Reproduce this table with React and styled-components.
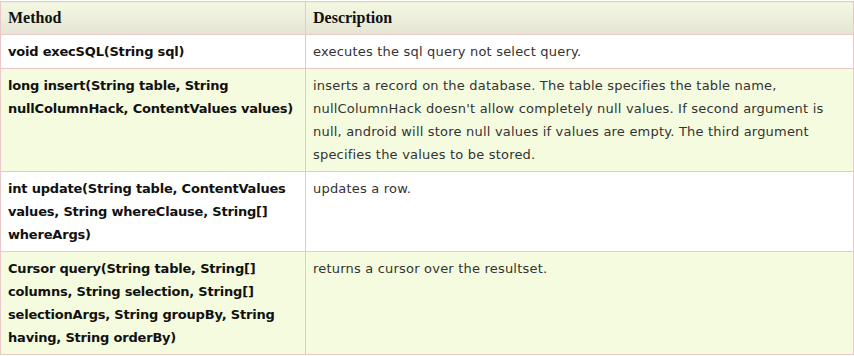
import React from "react";
import styled, { createGlobalStyle } from "styled-components";

const Global = createGlobalStyle`
  html, body { margin: 0; padding: 0; background: #fff; }
`;

const Table = styled.table`
  width: 854px;
  border-collapse: collapse;
  margin-top: 1px;
  font-family: "DejaVu Sans", Verdana, sans-serif;
  font-size: 13px;
  color: #222;
`;

const HeadCell = styled.th`
  text-align: left;
  height: 32px;
  padding: 0 6px 0 7px;
  font-family: "Liberation Serif", "Times New Roman", serif;
  font-size: 16px;
  font-weight: bold;
  color: #111;
  background: linear-gradient(#f4f8e2, #e4e5d3);
  border: 1px solid #e8c8c8;
  width: ${(p) => p.$w || "auto"};
`;

const Row = styled.tr`
  background: ${(p) => (p.$alt ? "#f5fbdf" : "#ffffff")};
`;

const Cell = styled.td`
  vertical-align: top;
  padding: 5px 6px 5px 7px;
  line-height: 23px;
  border: 1px solid #e8c8c8;
  font-weight: ${(p) => (p.$bold ? "bold" : "normal")};
  letter-spacing: ${(p) => (p.$bold ? "-0.2px" : "0.2px")};
  color: ${(p) => (p.$bold ? "#111" : "#333")};
`;

const rows = [
  {
    m: "void execSQL(String sql)",
    d: "executes the sql query not select query.",
  },
  {
    m: "long insert(String table, String nullColumnHack, ContentValues values)",
    d: "inserts a record on the database. The table specifies the table name, nullColumnHack doesn't allow completely null values. If second argument is null, android will store null values if values are empty. The third argument specifies the values to be stored.",
  },
  {
    m: "int update(String table, ContentValues values, String whereClause, String[] whereArgs)",
    d: "updates a row.",
  },
  {
    m: "Cursor query(String table, String[] columns, String selection, String[] selectionArgs, String groupBy, String having, String orderBy)",
    d: "returns a cursor over the resultset.",
  },
];

export default function App() {
  return (
    <>
      <Global />
      <Table>
        <thead>
          <tr>
            <HeadCell $w="291px">Method</HeadCell>
            <HeadCell>Description</HeadCell>
          </tr>
        </thead>
        <tbody>
          {rows.map((r, i) => (
            <Row key={i} $alt={i % 2 === 1}>
              <Cell $bold>{r.m}</Cell>
              <Cell>{r.d}</Cell>
            </Row>
          ))}
        </tbody>
      </Table>
    </>
  );
}
